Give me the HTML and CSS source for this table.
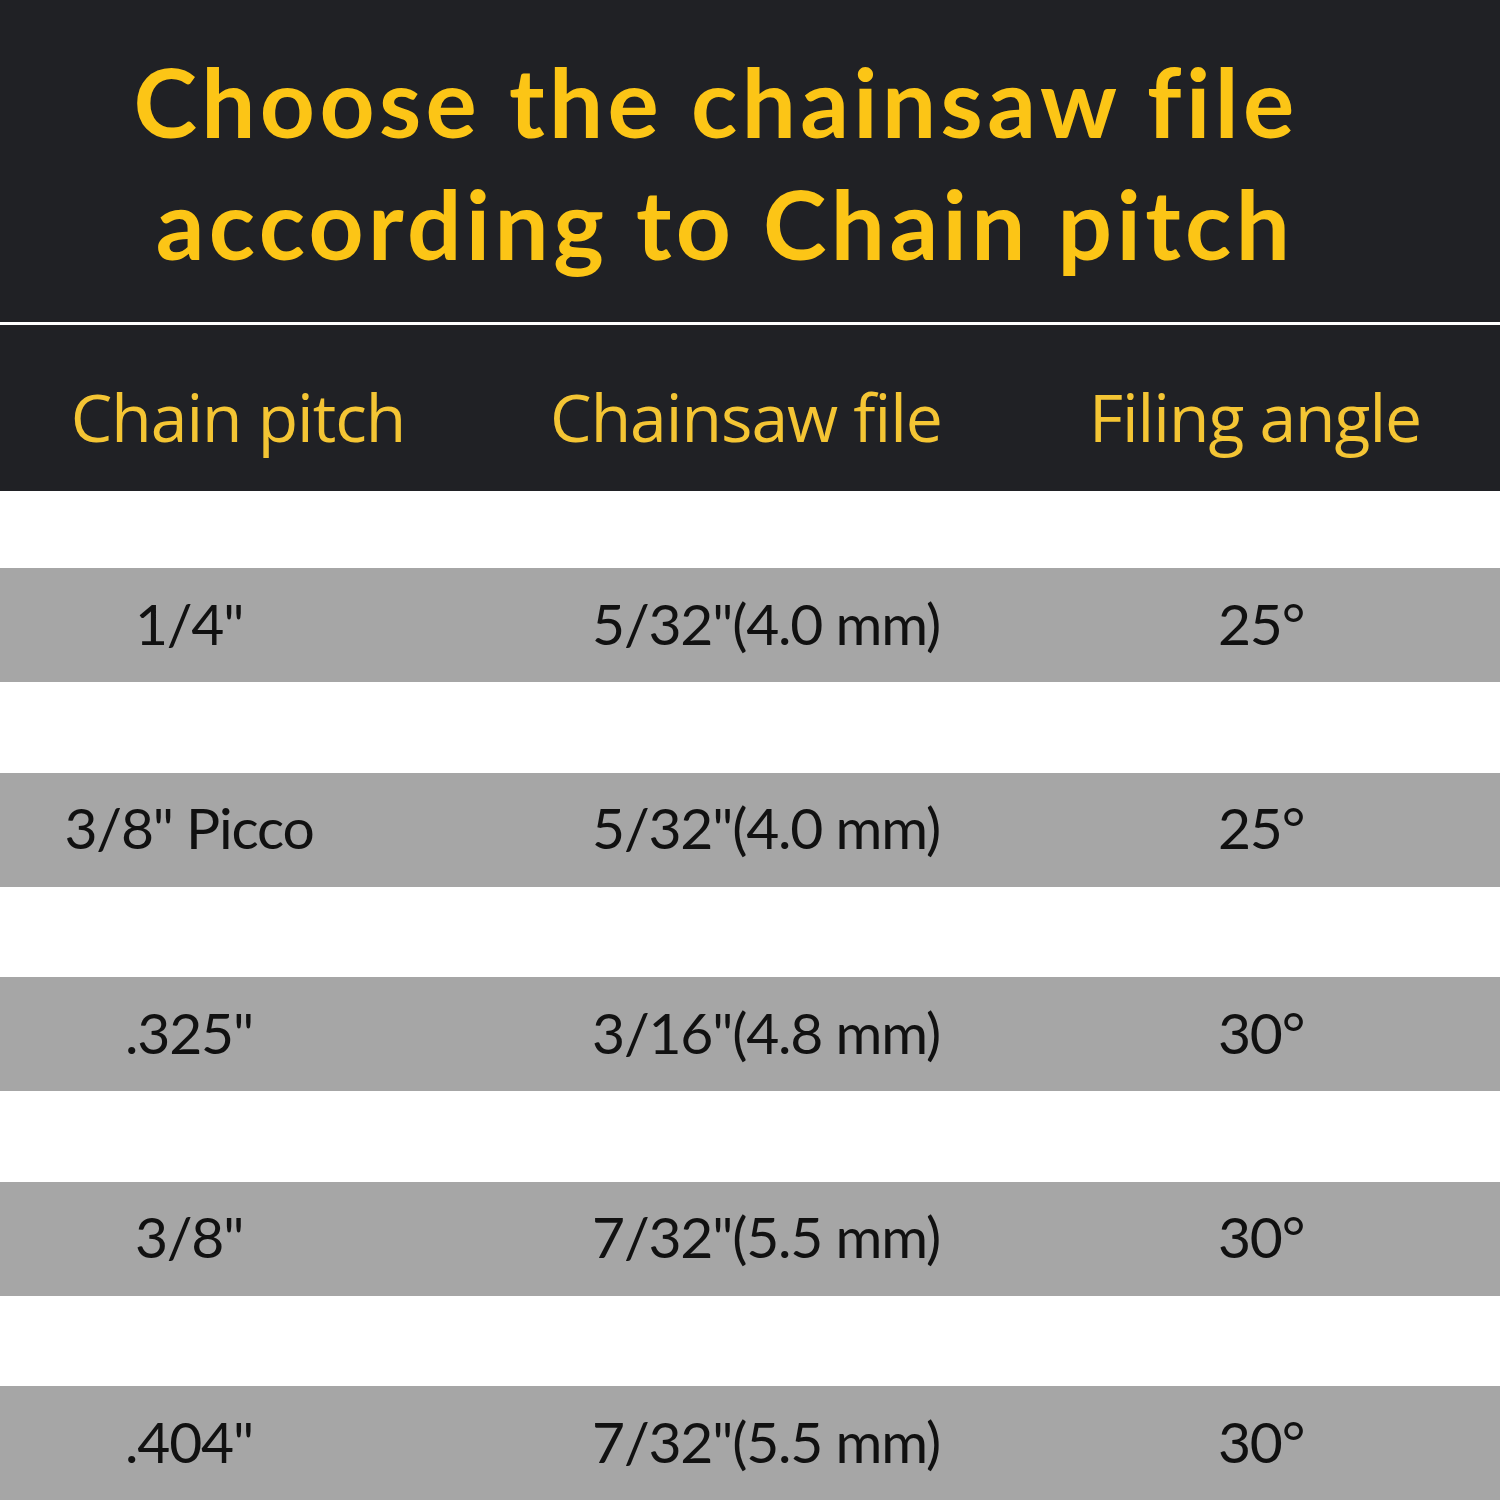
FILE: index.html
```html
<!DOCTYPE html>
<html lang="en">
<head>
<meta charset="utf-8">
<title>Choose the chainsaw file according to Chain pitch</title>
<link rel="stylesheet" href="styles.css">
</head>
<body>
<main class="page">
  <header class="hero">
    <h1 class="title"><span class="line">Choose the chainsaw file</span><span class="line second">according to Chain pitch</span></h1>
  </header>
  <div class="divider"></div>
  <div class="thead">
    <div class="th">Chain pitch</div>
    <div class="th">Chainsaw file</div>
    <div class="th">Filing angle</div>
  </div>
  <div class="tbody">
    <div class="gap first"></div>
    <div class="row"><div class="td">1/4"</div><div class="td">5/32"(4.0 mm)</div><div class="td">25°</div></div>
    <div class="gap"></div>
    <div class="row"><div class="td">3/8" Picco</div><div class="td">5/32"(4.0 mm)</div><div class="td">25°</div></div>
    <div class="gap"></div>
    <div class="row"><div class="td">.325"</div><div class="td">3/16"(4.8 mm)</div><div class="td">30°</div></div>
    <div class="gap"></div>
    <div class="row"><div class="td">3/8"</div><div class="td">7/32"(5.5 mm)</div><div class="td">30°</div></div>
    <div class="gap"></div>
    <div class="row"><div class="td">.404"</div><div class="td">7/32"(5.5 mm)</div><div class="td">30°</div></div>
  </div>
</main>
</body>
</html>
```

FILE: styles.css
```css
html, body {
  margin: 0;
  padding: 0;
  background: #ffffff;
}
.page {
  width: 1500px;
  height: 1500px;
  overflow: hidden;
  display: flex;
  flex-direction: column;
}
.hero {
  background: #202125;
  height: 322px;
  box-sizing: border-box;
  padding-top: 40px;
  padding-right: 68px;
}
.title {
  margin: 0;
  font-family: "Lato", "Liberation Sans", sans-serif;
  font-weight: 700;
  font-size: 96px;
  line-height: 122px;
  color: #fcc516;
  text-align: center;
  letter-spacing: 4.4px;
}
.line {
  display: block;
}
.line.second {
  padding-left: 18px;
}
.divider {
  height: 3px;
  background: #ffffff;
}
.thead {
  background: #202125;
  height: 166px;
  box-sizing: border-box;
  padding-top: 16px;
  display: grid;
  grid-template-columns: 476px 540px 484px;
  align-items: center;
}
.th {
  text-align: center;
  font-family: "Open Sans", "Liberation Sans", sans-serif;
  font-weight: 400;
  font-size: 66px;
  letter-spacing: -1px;
  color: #f4c534;
}
.th:last-child {
  padding-right: 6px;
}
.tbody {
  display: flex;
  flex-direction: column;
}
.gap {
  height: 90.5px;
}
.gap.first {
  height: 77px;
}
.row {
  height: 114px;
  background: #a6a6a6;
  display: grid;
  grid-template-columns: 378px 776px 214px 132px;
  align-items: center;
}
.td {
  text-align: center;
  font-family: "Lato", "Liberation Sans", sans-serif;
  font-weight: 400;
  font-size: 57px;
  letter-spacing: -1.2px;
  color: #111111;
  white-space: nowrap;
  padding-bottom: 5px;
}
```
